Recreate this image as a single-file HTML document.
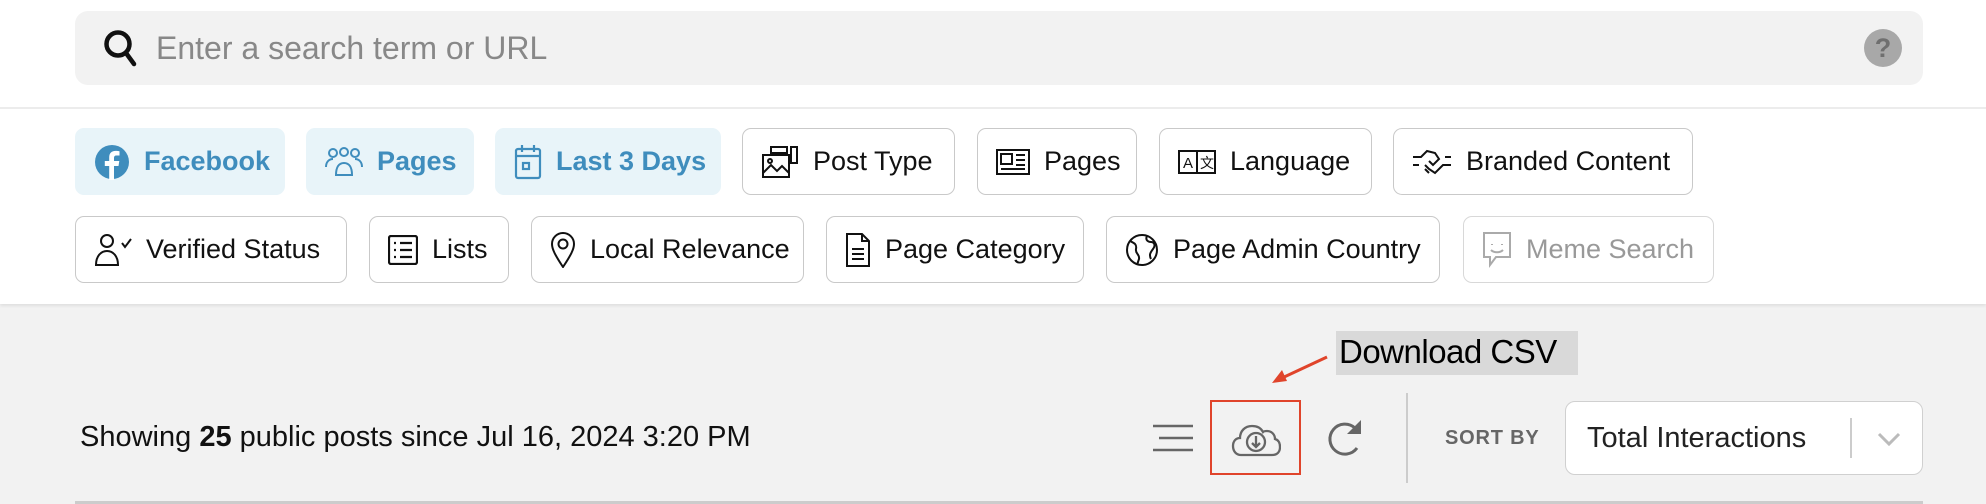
<!DOCTYPE html>
<html><head><meta charset="utf-8"><style>
*{box-sizing:border-box;margin:0;padding:0}
body{width:1986px;height:504px;overflow:hidden;background:#f2f2f2;font-family:"Liberation Sans",Arial,sans-serif;position:relative}
.top{position:absolute;left:0;top:0;width:1986px;height:304px;background:#fff;box-shadow:0 2px 3px rgba(0,0,0,.08)}
.search{position:absolute;left:75px;top:11px;width:1848px;height:74px;background:#f2f2f2;border-radius:13px}
.search .ph{position:absolute;left:81px;top:19px;font-size:32px;color:#888}
.hr{position:absolute;left:0;top:107px;width:1986px;height:2px;background:#ececec}
.chip{position:absolute;height:67px;border:1.5px solid #c9c9c9;border-radius:9px;background:#fff;display:flex;align-items:center;padding-left:18px;font-size:27px;color:#111;white-space:nowrap}
.chip svg{margin-right:14px;flex:none}
.act{background:#e8f4f9;border-color:#e8f4f9;color:#3f8dbd;font-weight:bold}
.r1{top:128px}.r2{top:216px}
.dis{color:#999;border-color:#d8d8d8}
</style></head><body>
<div class="top">
<div class="search">
<svg style="position:absolute;left:28px;top:17px" width="36" height="40" viewBox="0 0 36 40"><circle cx="15" cy="16" r="11.5" fill="none" stroke="#111" stroke-width="4.5"/><path d="M23 25l8 11" stroke="#111" stroke-width="4.5" stroke-linecap="round"/></svg>
<div class="ph">Enter a search term or URL</div>
<div style="position:absolute;left:1789px;top:18px;width:38px;height:38px;border-radius:50%;background:#a8a8a8;color:#6f6f6f;font-weight:bold;font-size:27px;text-align:center;line-height:38px">?</div>
</div>
<div class="hr"></div>

<div class="chip act r1" style="left:75px;width:210px"><svg width="36" height="36" viewBox="0 0 36 36"><circle cx="18" cy="18" r="17" fill="#3f8dbd"/><path d="M20 36V22h4.5l.8-5H20v-3c0-1.5.6-2.5 2.6-2.5H25.5V7.2c-.6-.1-2.2-.3-4-.3-4 0-6.3 2.4-6.3 6.6V17h-4.4v5h4.4v14z" fill="#fff"/></svg>Facebook</div>
<div class="chip act r1" style="left:306px;width:168px;font-weight:bold"><svg width="38" height="30" viewBox="0 0 38 30" fill="none" stroke="#3f8dbd" stroke-width="2"><circle cx="8" cy="6" r="4"/><circle cx="19" cy="5" r="4"/><circle cx="30" cy="6" r="4"/><path d="M1 20c0-5 3-8 7-8M37 20c0-5-3-8-7-8M11 28c0-8 3-12 8-12s8 4 8 12z"/></svg>Pages</div>
<div class="chip act r1" style="left:495px;width:226px"><svg width="28" height="36" viewBox="0 0 28 36" fill="none" stroke="#3f8dbd" stroke-width="2.2"><rect x="2" y="5" width="24" height="29" rx="2"/><path d="M2 12h24M8 1v7M20 1v7"/><rect x="9" y="19" width="6" height="6"/></svg>Last 3 Days</div>
<div class="chip r1" style="left:742px;width:213px"><svg width="38" height="34" viewBox="0 0 38 34" fill="none" stroke="#111" stroke-width="2"><rect x="2" y="10" width="26" height="22"/><path d="M2 28l8-8 6 6 5-5 7 7"/><circle cx="9" cy="16" r="2"/><rect x="10" y="2" width="16" height="6"/><rect x="30" y="2" width="6" height="16"/></svg>Post Type</div>
<div class="chip r1" style="left:977px;width:160px"><svg width="34" height="26" viewBox="0 0 34 26" fill="none" stroke="#111" stroke-width="2"><rect x="1" y="1" width="32" height="24"/><rect x="5" y="5" width="11" height="10"/><path d="M20 6h9M20 11h9M20 16h9M5 20h24"/></svg>Pages</div>
<div class="chip r1" style="left:1159px;width:213px"><svg width="38" height="24" viewBox="0 0 38 24" fill="none" stroke="#111" stroke-width="2"><rect x="1" y="1" width="36" height="22"/><path d="M19 1v22"/><text x="5" y="18" font-size="15" fill="#111" stroke="none" font-family="Liberation Sans">A</text><text x="22" y="18" font-size="14" fill="#111" stroke="none" font-family="Noto Sans CJK SC">文</text></svg>Language</div>
<div class="chip r1" style="left:1393px;width:300px"><svg width="40" height="30" viewBox="0 0 40 30" fill="none" stroke="#111" stroke-width="2"><path d="M1 10h8l6-6 8 2 4 6-6 6-4-4M39 18h-8l-8 8-6-4-4-4M1 18h6M33 10h6M13 22l4 4"/></svg>Branded Content</div>

<div class="chip r2" style="left:75px;width:272px"><svg width="38" height="34" viewBox="0 0 38 34" fill="none" stroke="#111" stroke-width="2"><circle cx="13" cy="8" r="6"/><path d="M2 32c0-9 5-14 11-14s11 5 11 14z M28 10l3 4 6-8"/></svg>Verified Status</div>
<div class="chip r2" style="left:369px;width:140px"><svg width="30" height="30" viewBox="0 0 30 30" fill="none" stroke="#111" stroke-width="2.2"><rect x="1" y="1" width="28" height="28" rx="2"/><path d="M6 8h2M12 8h12M6 15h2M12 15h12M6 22h2M12 22h12"/></svg>Lists</div>
<div class="chip r2" style="left:531px;width:273px"><svg width="26" height="36" viewBox="0 0 26 36" fill="none" stroke="#111" stroke-width="2"><path d="M13 35C5 23 2 17 2 12a11 11 0 0 1 22 0c0 5-3 11-11 23z"/><circle cx="13" cy="12" r="4.5"/></svg>Local Relevance</div>
<div class="chip r2" style="left:826px;width:258px"><svg width="26" height="36" viewBox="0 0 26 36" fill="none" stroke="#111" stroke-width="2"><path d="M2 2h15l7 7v25H2z M17 2v7h7M7 17h12M7 22h12M7 27h12"/></svg>Page Category</div>
<div class="chip r2" style="left:1106px;width:334px"><svg width="34" height="34" viewBox="0 0 34 34" fill="none" stroke="#111" stroke-width="2"><circle cx="17" cy="17" r="15"/><path d="M5 8c4 2 7 3 6 8s4 5 3 10l-2 6M22 3c-2 4 1 6 4 6s5 3 2 7-4 6-2 10"/></svg>Page Admin Country</div>
<div class="chip r2 dis" style="left:1463px;width:251px"><svg width="30" height="38" viewBox="0 0 30 38" fill="none" stroke="#aaa" stroke-width="2"><path d="M2 2h26v24H14l-6 8v-8H2z"/><path d="M10 13v1M20 13v1M9 19c3 3 9 3 12 0"/></svg>Meme Search</div>
</div>

<div style="position:absolute;left:80px;top:421px;font-size:29px;color:#111">Showing <b>25</b> public posts since Jul 16, 2024 3:20 PM</div>

<div style="position:absolute;left:1336px;top:331px;width:242px;height:44px;background:#d9d9d9"></div>
<div style="position:absolute;left:1339px;top:333px;font-size:33px;color:#000;letter-spacing:-.5px">Download CSV</div>
<svg style="position:absolute;left:1270px;top:352px" width="62" height="34" viewBox="0 0 62 34"><path d="M57 5L12 26" stroke="#e0442b" stroke-width="3"/><path d="M2 31l10-13 5 11z" fill="#e0442b"/></svg>

<svg style="position:absolute;left:1153px;top:424px" width="40" height="28" viewBox="0 0 40 28"><path d="M0 2h40M6 14h34M0 26h40" stroke="#666" stroke-width="2.5"/></svg>
<div style="position:absolute;left:1210px;top:400px;width:91px;height:75px;border:2px solid #e0442b"></div>
<svg style="position:absolute;left:1231px;top:417px" width="50" height="42" viewBox="0 0 50 42" fill="none" stroke="#666" stroke-width="2.3"><path d="M12 38H10C5 38 2 34 2 29s3-8 7-8c0-7 5-12 12-12 5 0 9 2 11 6 1-1 3-1 4-1 5 0 8 4 8 8 4 1 5 4 5 8 0 5-3 8-8 8H12z"/><circle cx="25" cy="25" r="9"/><path d="M25 19v11M21 26l4 4 4-4"/></svg>
<svg style="position:absolute;left:1325px;top:418px" width="40" height="40" viewBox="0 0 40 40" fill="none"><path d="M30 10A15 15 0 1 0 32 30" stroke="#666" stroke-width="3"/><path d="M36 2v14H22z" fill="#666"/></svg>
<div style="position:absolute;left:1406px;top:393px;width:2px;height:90px;background:#ccc"></div>
<div style="position:absolute;left:1445px;top:427px;font-size:20px;font-weight:bold;color:#666;letter-spacing:.8px">SORT BY</div>
<div style="position:absolute;left:1565px;top:401px;width:358px;height:74px;background:#fff;border:1.5px solid #d0d0d0;border-radius:10px">
<div style="position:absolute;left:21px;top:20px;font-size:29px;color:#222">Total Interactions</div>
<div style="position:absolute;left:284px;top:16px;width:2px;height:40px;background:#ccc"></div>
<svg style="position:absolute;left:311px;top:30px" width="24" height="14" viewBox="0 0 24 14"><path d="M2 2l10 10 10-10" fill="none" stroke="#bbb" stroke-width="3"/></svg>
</div>
<div style="position:absolute;left:75px;top:501px;width:1848px;height:3px;background:#ccc"></div>
</body></html>
